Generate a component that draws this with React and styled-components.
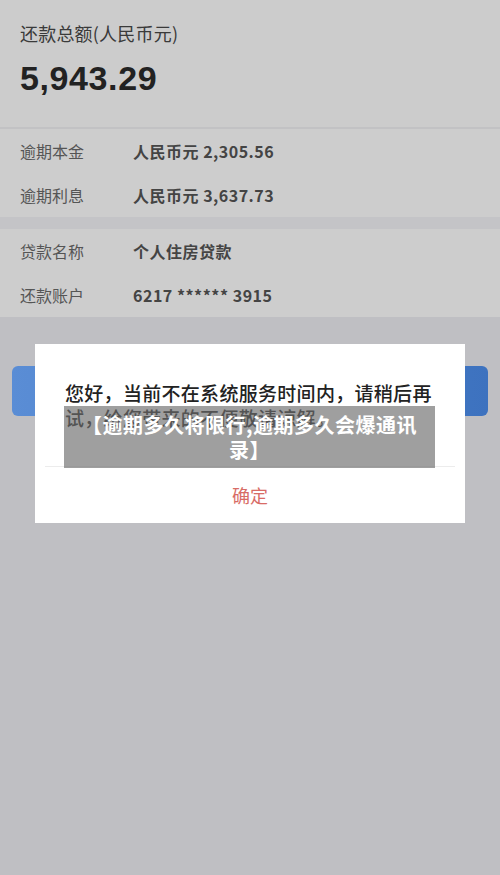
import React from 'react';
import styled, { createGlobalStyle } from 'styled-components';

const GlobalStyle = createGlobalStyle`
    html, body {
        margin: 0;
        padding: 0;
        background: #bfbfc3;
    }
    body {
        font-family: "Noto Sans CJK SC", "Liberation Sans", sans-serif;
    }
`

const Screen = styled.div`
    position: relative;
    width: 500px;
    min-height: 875px;
    background: #bfbfc3;
    display: flex;
    flex-direction: column;
    overflow: hidden;
`

const Summary = styled.div`
    height: 129px;
    background: #cccccc;
    border-bottom: 2px solid #c2c2c4;
    padding: 20px 20px 0;
    box-sizing: border-box;
    display: flex;
    flex-direction: column;
`

const SummaryTitle = styled.div`
    font-size: 18px;
    line-height: 26px;
    letter-spacing: 0.2px;
    color: #3a3a3a;
`

const Amount = styled.div`
    margin-top: 15px;
    font-family: "Liberation Sans", Arial, sans-serif;
    font-weight: bold;
    font-size: 34px;
    letter-spacing: 0.6px;
    line-height: 34px;
    color: #222;
`

const Section = styled.div`
    background: #cdcdcd;
    display: flex;
    flex-direction: column;
`

const SectionGap = styled.div`
    height: 12px;
    background: #c4c4c7;
`

const Row = styled.div`
    height: 44px;
    display: flex;
    align-items: center;
    padding-left: 20px;
`

const Label = styled.span`
    width: 113px;
    font-size: 16px;
    color: #555;
`

const Value = styled.span`
    font-size: 16px;
    letter-spacing: 0.5px;
    font-weight: 600;
    color: #444;
`

const Bottom = styled.div`
    flex: 1;
    padding: 49px 12px 0;
`

const BlueButton = styled.div`
    height: 50px;
    border-radius: 6px;
    background: linear-gradient(90deg, #5a8dd5, #3d72bf);
`

const Dialog = styled.div`
    position: absolute;
    top: 344px;
    left: 35px;
    width: 430px;
    height: 179px;
    background: #fff;
    display: flex;
    flex-direction: column;
`

const DialogText = styled.div`
    padding: 36px 30px 0;
    font-size: 19px;
    letter-spacing: 0.3px;
    line-height: 25px;
    font-weight: 500;
    color: #222;
`

const Divider = styled.div`
    margin: 36px 10px 0;
    height: 1px;
    background: #ececec;
`

const ConfirmButton = styled.div`
    flex: 1;
    display: flex;
    align-items: center;
    justify-content: center;
    font-size: 18px;
    color: #d86c66;
`

const Caption = styled.div`
    position: absolute;
    top: 406px;
    left: 64px;
    width: 371px;
    height: 62px;
    box-sizing: border-box;
    padding: 6px 16px 0;
    background: rgba(110, 110, 110, 0.66);
    color: #fff;
    font-weight: bold;
    font-size: 20px;
    letter-spacing: 0.5px;
    line-height: 25px;
    text-align: center;
`

const details = [
    [
        ['逾期本金', '人民币元 2,305.56'],
        ['逾期利息', '人民币元 3,637.73'],
    ],
    [
        ['贷款名称', '个人住房贷款'],
        ['还款账户', '6217 ****** 3915'],
    ],
]

const App = () => {
    return (
        <Screen>
            <GlobalStyle />
            <Summary>
                <SummaryTitle>还款总额(人民币元)</SummaryTitle>
                <Amount>5,943.29</Amount>
            </Summary>
            {details.map((rows, i) => (
                <React.Fragment key={i}>
                    {i > 0 && <SectionGap />}
                    <Section>
                        {rows.map(([label, value]) => (
                            <Row key={label}>
                                <Label>{label}</Label>
                                <Value>{value}</Value>
                            </Row>
                        ))}
                    </Section>
                </React.Fragment>
            ))}
            <Bottom>
                <BlueButton />
            </Bottom>
            <Dialog>
                <DialogText>您好，当前不在系统服务时间内，请稍后再试，给您带来的不便敬请谅解。</DialogText>
                <Divider />
                <ConfirmButton>确定</ConfirmButton>
            </Dialog>
            <Caption>【逾期多久将限行,逾期多久会爆通讯录】</Caption>
        </Screen>
    );
};

export default App;
